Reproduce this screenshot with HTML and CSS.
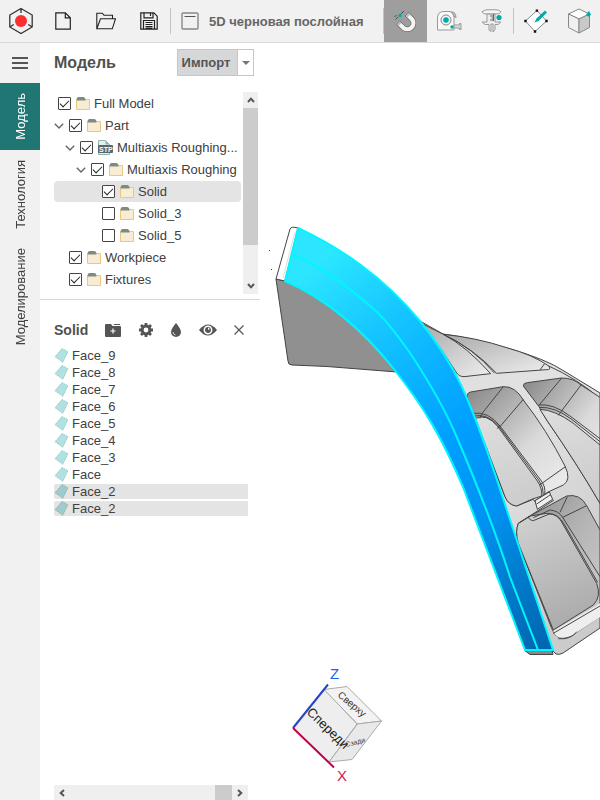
FILE: index.html
```html
<!DOCTYPE html>
<html lang="ru">
<head>
    <meta charset="utf-8">
    <title>5D черновая послойная</title>
    <link rel="stylesheet" href="styles.css">
</head>
<body>
    <!-- shared icons -->
    <svg class="defs" aria-hidden="true">
        <symbol id="folder" viewBox="0 0 14 13">
            <path d="M.5 2.500h13v10H.5z" fill="#f8edd2" stroke="#e9c77c"/>
            <path d="M.5 3.500q0-3.500 2-3.500h4.500q2.500 0 2.500 3.500z" fill="#7d8b80"/>
        </symbol>
        <symbol id="face" viewBox="0 0 14 15">
            <path d="M7.500.6 13.400 3.700 8.300 14.300.6 8.700z" fill="#b2e2e0" stroke="#86bfbd" stroke-width=".8" stroke-dasharray="1.500 .7"/>
        </symbol>
        <symbol id="arrow" viewBox="0 0 10 6">
            <path d="M.8.8 5 5 9.200.8" fill="none" stroke="#666" stroke-width="1.400"/>
        </symbol>
        <symbol id="scroll" viewBox="0 0 8 6">
            <path d="M1 5 4 1.700 7 5" fill="none" stroke="#555" stroke-width="2"/>
        </symbol>
    </svg>

    <header class="toolbar">
        <a class="logo" href="#" aria-label="Home">
            <svg width="26" height="28" viewBox="0 0 26 28" fill="none" stroke="#333" stroke-width="1.300">
                <path d="M13 1.500 24.200 8v12L13 26.500 1.800 20V8zM13 1.500V6M1.800 20l4-2.500M24.200 20l-4-2.500"/>
                <circle cx="13" cy="14" r="6" fill="#fb2f31" stroke="none"/>
            </svg>
        </a>
        <button class="tool" aria-label="New">
            <svg width="16" height="18" viewBox="0 0 16 18" fill="none" stroke="#222" stroke-width="1.200">
                <path d="M.8.8h9.500l5 5v11.400H.8zM10.300.8v5h5"/>
            </svg>
        </button>
        <button class="tool" aria-label="Open">
            <svg width="20" height="18" viewBox="0 0 20 18" fill="none" stroke="#222" stroke-width="1.100">
                <path d="M.8 16.800V1.200h5.500L8 3.200h8.500v3.500M.8 16.800 4.500 6.700h15l-3.200 10.100z"/>
            </svg>
        </button>
        <button class="tool" aria-label="Save">
            <svg width="18" height="18" viewBox="0 0 18 18" fill="none" stroke="#222" stroke-width="1.200">
                <path d="M.8.8h13l3.400 3.400v13H.8zM4 .8v5h9v-5M10.500 1v3M3.500 17V8.500h11V17M5.500 10.500h7M5.500 12.500h7M5.500 14.500h7M5.500 16.200h7"/>
            </svg>
        </button>
        <span class="sep"></span>
        <div class="operation">
            <svg width="18" height="18" viewBox="0 0 18 18" fill="none" stroke="#888">
                <rect x="1" y="1" width="16" height="16" rx="1" stroke-width="1.400"/>
                <path d="M3.500 4.500h11" stroke="#555"/>
            </svg>
            <span>5D черновая послойная</span>
        </div>
        <span class="sep"></span>
        <button class="tool active" aria-label="Snap">
            <svg width="24" height="24" viewBox="0 0 24 24" fill="none">
                <path d="m4 13.500 5.500 5.500A6.200 6.200 0 0 0 18.300 10.500L12.800 5" stroke="#666" stroke-width="5.600"/>
                <path d="m4.500 14 5 5A6.200 6.200 0 0 0 18.300 10.500L13.300 5.500" stroke="#f4f4f4" stroke-width="4.200"/>
                <path d="m4.300 13.800 1.700 1.700M13.100 5.300 14.800 7" stroke="#bbb" stroke-width="4.200"/>
                <path d="m1.500 10.500 2.500-2.500M6 6l4-4M.5 8l2-2" stroke="#444" stroke-width=".9"/>
                <circle cx="6" cy="6.500" r="1.700" fill="#00aaa8"/>
            </svg>
        </button>
        <button class="tool" aria-label="Measure">
            <svg width="26" height="22" viewBox="0 0 26 22" stroke="#999">
                <path d="M14 2h3.500q3 2.500 2.500 6z" fill="#bbb"/>
                <path d="M1.500 20V8q0-6.500 6.500-6.500h6q4 2 4 6V20z" fill="#f9f9f9"/>
                <path d="M18 15h5.500v-1.500h1.500v6h-1.500V18H18z" fill="#ddd"/>
                <circle cx="10" cy="10" r="5" fill="#f4f4f4" stroke="#888"/>
                <circle cx="10" cy="10" r="2.800" fill="#00aaa8" stroke="none"/>
                <circle cx="16" cy="17" r="1.700" fill="#00aaa8" stroke="none"/>
            </svg>
        </button>
        <button class="tool" aria-label="Caliper">
            <svg width="22" height="24" viewBox="0 0 22 24" fill="#eee" stroke="#999">
                <path d="M6 5h8v8h6l-3 2.500h-3v5l-2 2.500V15h-2v7.500L8 21v-5.500H4L1 13h5z"/>
                <path d="M1 2.800Q4 .8 6 .8h9q3 0 5 2l-2 2H3z" fill="#f6f6f6"/>
                <path d="M9 7h3M10.500 9H12M9 11h3M12.500 5v7" stroke="#666"/>
                <circle cx="18" cy="8.500" r="2.600" fill="#00aaa8" stroke="none"/>
            </svg>
        </button>
        <span class="sep"></span>
        <button class="tool" aria-label="Sketch">
            <svg width="24" height="24" viewBox="0 0 24 24">
                <path d="M13 1.500 22.500 12 11 22.500 1.500 12z" fill="#fff" stroke="#888"/>
                <path d="M11.700.4h2.400v2.400h-2.400zM21.300 10.800h2.400v2.400h-2.400zM9.800 21.300h2.400v2.400H9.800zM.3 10.800h2.400v2.400H.3z" fill="#111"/>
                <path d="m12.500 9.500 8.500-8 2 2-8.500 8.500-4 1.500z" fill="#00aaa8"/>
            </svg>
        </button>
        <button class="tool" aria-label="Solid body">
            <svg width="24" height="26" viewBox="0 0 24 26" stroke="#888">
                <path d="m12 1 10.500 5L12 11 1.500 6z" fill="#fff"/>
                <path d="M1.500 6 12 11v14L1.500 19.500z" fill="#f0f0f0"/>
                <path d="M22.500 6 12 11v14l10.500-5.500z" fill="#c9c9c9"/>
                <path d="m22 3 2 3.500-2 2.500-3-2.500z" fill="#00aaa8" stroke="none"/>
            </svg>
        </button>
    </header>

    <div class="workspace">
        <nav class="tabs">
            <button class="menu" aria-label="Menu"><i></i><i></i><i></i></button>
            <button class="tab current"><span>Модель</span></button>
            <button class="tab"><span>Технология</span></button>
            <button class="tab"><span>Моделирование</span></button>
        </nav>

        <aside class="side">
            <section class="model">
                <div class="model-head">
                    <h1>Модель</h1>
                    <div class="import">
                        <button class="import-btn">Импорт</button>
                        <button class="import-more" aria-label="More"></button>
                    </div>
                </div>
                <div class="tree-wrap">
                    <ul class="tree">
                        <li><label><input type="checkbox" checked><svg class="fold"><use href="#folder"/></svg>Full Model</label></li>
                        <li><svg class="arr"><use href="#arrow"/></svg><label><input type="checkbox" checked><svg class="fold"><use href="#folder"/></svg>Part</label></li>
                        <li class="lvl1"><svg class="arr"><use href="#arrow"/></svg><label><input type="checkbox" checked><svg class="stp" viewBox="0 0 16 15">
                            <path d="M1.500.5h7l4 4v10h-11z" fill="#e4f1f0" stroke="#8fb5b3"/>
                            <path d="M8.500.5v4h4z" fill="#8fb5b3"/>
                            <rect x="1" y="5" width="15" height="8" rx="1" fill="#58686b"/>
                            <text x="2" y="12" class="stp-text">STP</text>
                        </svg>Multiaxis Roughing...</label></li>
                        <li class="lvl2"><svg class="arr"><use href="#arrow"/></svg><label><input type="checkbox" checked><svg class="fold"><use href="#folder"/></svg>Multiaxis Roughing</label></li>
                        <li class="lvl3 selected"><label><input type="checkbox" checked><svg class="fold"><use href="#folder"/></svg>Solid</label></li>
                        <li class="lvl3"><label><input type="checkbox"><svg class="fold"><use href="#folder"/></svg>Solid_3</label></li>
                        <li class="lvl3"><label><input type="checkbox"><svg class="fold"><use href="#folder"/></svg>Solid_5</label></li>
                        <li class="lvl0"><label><input type="checkbox" checked><svg class="fold"><use href="#folder"/></svg>Workpiece</label></li>
                        <li class="lvl0"><label><input type="checkbox" checked><svg class="fold"><use href="#folder"/></svg>Fixtures</label></li>
                    </ul>
                    <div class="vscroll">
                        <button aria-label="Up"><svg><use href="#scroll"/></svg></button>
                        <div class="thumb"></div>
                        <button class="down" aria-label="Down"><svg><use href="#scroll"/></svg></button>
                    </div>
                </div>
            </section>

            <section class="faces">
                <div class="faces-head">
                    <h2>Solid</h2>
                    <button aria-label="Add folder">
                        <svg width="16" height="13" viewBox="0 0 16 13">
                            <path d="M0 1q0-1 1-1h5l1.500 2H15q1 0 1 1v9q0 1-1 1H1q-1 0-1-1z" fill="#555"/>
                            <path d="M8.500 0H15v1H9.300z" fill="#555"/>
                            <path d="M8 4.500v5M5.500 7h5" stroke="#fff" stroke-width="1.200"/>
                        </svg>
                    </button>
                    <button aria-label="Settings">
                        <svg width="14" height="14" viewBox="0 0 14 14">
                            <circle cx="7" cy="7" r="3.900" fill="none" stroke="#555" stroke-width="3"/>
                            <path d="M7 0v2.500M7 11.500V14M0 7h2.500M11.500 7H14M2 2l2 2M10 10l2 2M12 2l-2 2M4 10l-2 2" stroke="#555" stroke-width="2.800"/>
                        </svg>
                    </button>
                    <button aria-label="Colour">
                        <svg width="12" height="14" viewBox="0 0 12 14">
                            <path d="M6 0q5 6 5 9a5 5 0 0 1-10 0q0-3 5-9z" fill="#555"/>
                            <path d="M3 9q0 2.500 2.500 3" fill="none" stroke="#ddd"/>
                        </svg>
                    </button>
                    <button aria-label="Visibility">
                        <svg width="18" height="12" viewBox="0 0 18 12">
                            <path d="M0 6Q9-5 18 6 9 17 0 6z" fill="#555"/>
                            <circle cx="9" cy="6" r="3.700" fill="none" stroke="#fff" stroke-width="1.500"/>
                            <path d="M9 6V3.500L11 5z" fill="#fff"/>
                        </svg>
                    </button>
                    <button aria-label="Close">
                        <svg width="10" height="10" viewBox="0 0 10 10">
                            <path d="m.5.5 9 9M9.500.5l-9 9" stroke="#555" stroke-width="1.200"/>
                        </svg>
                    </button>
                </div>
                <ul class="face-list">
                    <li><svg><use href="#face"/></svg>Face_9</li>
                    <li><svg><use href="#face"/></svg>Face_8</li>
                    <li><svg><use href="#face"/></svg>Face_7</li>
                    <li><svg><use href="#face"/></svg>Face_6</li>
                    <li><svg><use href="#face"/></svg>Face_5</li>
                    <li><svg><use href="#face"/></svg>Face_4</li>
                    <li><svg><use href="#face"/></svg>Face_3</li>
                    <li><svg><use href="#face"/></svg>Face</li>
                    <li class="selected"><svg><use href="#face"/></svg>Face_2</li>
                    <li class="selected"><svg><use href="#face"/></svg>Face_2</li>
                </ul>
                <div class="hscroll">
                    <button aria-label="Left"><svg><use href="#scroll"/></svg></button>
                    <div class="thumb"></div>
                    <button class="right" aria-label="Right"><svg><use href="#scroll"/></svg></button>
                </div>
            </section>
        </aside>

        <main class="view">
            <svg class="scene" viewBox="260 43 340 757" preserveAspectRatio="xMinYMin meet">
                <defs>
                    <linearGradient id="blue" gradientUnits="userSpaceOnUse" x1="280" y1="295" x2="560" y2="630">
                        <stop offset="0" stop-color="#2ce6ff"/>
                        <stop offset=".08" stop-color="#22daff"/>
                        <stop offset=".2" stop-color="#16c6ff"/>
                        <stop offset=".35" stop-color="#0ab2ff"/>
                        <stop offset=".5" stop-color="#009fff"/>
                        <stop offset=".7" stop-color="#0092f2"/>
                        <stop offset=".85" stop-color="#007bcb"/>
                        <stop offset="1" stop-color="#0068b2"/>
                    </linearGradient>
                    <linearGradient id="body" x1="0" y1="0" x2=".6" y2="1">
                        <stop offset="0" stop-color="#ddd"/>
                        <stop offset=".5" stop-color="#e2e2e2"/>
                        <stop offset="1" stop-color="#cbcbcb"/>
                    </linearGradient>
                    <linearGradient id="rib" x1="0" y1="0" x2="1" y2="1">
                        <stop offset="0" stop-color="#a9a9a9"/>
                        <stop offset="1" stop-color="#eee"/>
                    </linearGradient>
                    <linearGradient id="wall" x1="0" y1="0" x2=".8" y2="1">
                        <stop offset="0" stop-color="#858585"/>
                        <stop offset=".3" stop-color="#b0b0b0"/>
                        <stop offset=".6" stop-color="#dadada"/>
                        <stop offset="1" stop-color="#ececec"/>
                    </linearGradient>
                    <linearGradient id="wall-low" x1="0" y1="0" x2=".8" y2="1">
                        <stop offset="0" stop-color="#8d8d8d"/>
                        <stop offset=".5" stop-color="#b4b4b4"/>
                        <stop offset="1" stop-color="#ccc"/>
                    </linearGradient>
                    <linearGradient id="floor" x1="0" y1="0" x2=".3" y2="1">
                        <stop offset="0" stop-color="#dedede"/>
                        <stop offset="1" stop-color="#cecece"/>
                    </linearGradient>
                    <linearGradient id="floor-low" x1="0" y1="0" x2=".3" y2="1">
                        <stop offset="0" stop-color="#d2d2d2"/>
                        <stop offset="1" stop-color="#adadad"/>
                    </linearGradient>
                </defs>

                <path d="M269 250.500h1" stroke="#080" stroke-width="1"/>
                <path d="M271 269.500h1" stroke="#c00" stroke-width="1"/>

                <!-- gray frame of the part -->
                <path class="edge" fill="url(#body)" d="M420 321 443 334Q468 337 507 348T564 371L600 393V628L563 653Q560 655 556 654L552 650 520 550 460 383z"/>
                <path class="edge" fill="#909090" d="M276 279 285 281C325 298 363 330 397 372L327 366.500 292 365Q288 365 288 361z"/>
                <path class="edge" fill="#fff" d="M276 279 290 229Q291 226 298 228L285 281z"/>
                <path d="M283 278 295 232" stroke="#ddd"/>
                <path class="edge" fill="#888" d="M524 650 530 654.500H553L552 650z"/>

                <!-- upper ribs -->
                <g class="edge" transform="translate(260 210) scale(.33333)">
                    <path fill="url(#rib)" d="M485 340 550 373Q620 410 692 491L612 500Q596 500 588 486L545 420z"/>
                    <path fill="url(#rib)" d="M550 373Q650 383 740 413 820 435 866 468 875 480 860 479L710 490Q640 415 550 373z"/>
                    <path fill="none" d="M550 373Q640 415 704 490M853 462 840 480M866 468Q950 505 1020 566"/>
                </g>

                <!-- pockets -->
                <g class="edge" transform="translate(380 370) scale(.33333)">
                    <path fill="url(#wall)" d="M262 86Q258 69 272 66L370 50Q405 48 430 90 500 180 555 288 575 330 550 345L500 368 492 375 465 392 470 402 460 388 410 408Q385 405 375 380z"/>
                    <path fill="url(#floor)" d="M286 145Q320 130 352 168L470 330Q488 355 485 378L455 388 410 408Q385 405 375 380z"/>
                    <path fill="none" d="M278 130Q325 123 360 168L482 330Q498 350 494 374M282 138Q322 130 356 168L476 330Q492 352 490 376M304 133 370 50M358 172 430 88M480 344 555 291M304 133 300 145M360 165 352 176"/>

                    <path fill="url(#wall)" d="M430 48Q430 39 442 38L545 24Q580 24 603 45L660 82V400Q590 280 500 150L477 110z"/>
                    <path fill="url(#floor)" d="M480 118Q525 120 580 160L660 225V400Q590 280 500 150z"/>
                    <path fill="none" d="M475 105Q520 100 570 138L660 206M478 112Q525 110 575 148L660 215M477 106 545 24M535 136 603 45"/>

                    <path fill="url(#wall-low)" d="M415 460 450 438 560 378Q600 370 620 407L660 480V740L575 797Q530 820 515 775L415 520Q405 485 415 460z"/>
                    <path fill="url(#floor-low)" d="M415 460 452 438 500 430Q535 430 550 465L650 640Q665 680 640 705L520 780 415 520Q405 485 415 460z"/>
                    <path fill="#eee" stroke="none" d="M520 783 648 708 660 700V742L575 797Q530 815 520 783z"/>
                    <path fill="none" d="M445 438Q445 450 460 452L508 432Q535 430 554 465L653 637M460 443 510 420Q535 422 548 442L660 620M548 442 620 407M540 427 562 380M520 790 660 708M535 806Q570 810 590 786"/>
                    <path fill="#eee" d="M465 392 508 366 518 388 472 418z"/>
                    <path fill="none" d="M470 402 512 374M415 460 450 438 522 390"/>
                </g>

                <!-- picked faces -->
                <path class="picked" fill="url(#blue)" d="M298 228C340 248 382 275 420 321 436 341 450 362 461 385 476 417 487 450 497 480L520 550 553 650H525L463 487C443 440 425 408 393 368 363 330 325 298 285 281z"/>
                <path class="picked" fill="none" d="M293 255C325 268 352 290 377 312 391 326 401 340 410 353 430 383 446 411 458 440 475 480 495 530 510 577L538 650"/>

                <!-- orientation cube -->
                <path d="M293 728 324 689 357 724 329 762z" fill="#eee" stroke="#aaa"/>
                <path d="M324 689.500 347 686.500 381.500 721 357.500 724z" fill="#f3f3f3" stroke="#aaa"/>
                <path d="M357.500 724 381.500 721 352 759.500 329 762z" fill="#e9e9e9" stroke="#aaa"/>
                <path d="m293 728 35-43.500" stroke="#2544c8" stroke-width="2"/>
                <path d="m293 728 41 39.500" stroke="#c3004f" stroke-width="2"/>
                <text class="axis" x="330" y="679" fill="#1b62e8">Z</text>
                <text class="axis" x="337" y="781" fill="#d01c50">X</text>
                <text class="front" transform="translate(306 713) rotate(44)">Спереди</text>
                <text class="top" transform="translate(337 696) rotate(40)">Сверху</text>
                <text class="back" transform="translate(346 747) rotate(-14)">Сзади</text>
            </svg>
        </main>
    </div>
</body>
</html>
```
FILE: styles.css
```css
* {
    box-sizing: border-box;
}

body {
    margin: 0;
    height: 100vh;
    display: flex;
    flex-direction: column;
    overflow: hidden;
    background-color: #fff;
    color: #404040;
    font-family: "Liberation Sans", Arial, sans-serif;
    font-size: 13px;
}

button {
    padding: 0;
    border: 0;
    background: none;
    color: inherit;
    font-family: inherit;
    font-size: inherit;
    cursor: pointer;
}

ul {
    list-style: none;
    margin: 0;
    padding: 0;
}

h1, h2 {
    margin: 0;
    color: #505050;
}

svg {
    display: block;
    flex: none;
}

.defs {
    position: absolute;
    width: 0;
    height: 0;
}

/* toolbar */
.toolbar {
    display: flex;
    align-items: center;
    flex: none;
    height: 43px;
    background-color: #f1f1f1;
    border-bottom: 1px solid #d8d8d8;
    overflow: hidden;
}

.logo {
    display: flex;
    justify-content: center;
    flex: none;
    width: 41px;
}

.tool {
    display: flex;
    align-items: center;
    justify-content: center;
    flex: none;
    width: 43px;
    height: 42px;
}

.tool.active {
    background-color: #9e9e9e;
}

.sep {
    flex: none;
    width: 1px;
    height: 26px;
    background-color: #c4c4c4;
}

.operation {
    display: flex;
    align-items: center;
    gap: 10px;
    flex: none;
    width: 212px;
    padding-left: 10px;
    color: #666;
    font-size: 13px;
    font-weight: bold;
    white-space: nowrap;
}

.workspace {
    display: flex;
    flex: 1;
    min-height: 0;
}

/* vertical tabs */
.tabs {
    display: flex;
    flex-direction: column;
    width: 40px;
    background-color: #f1f1f1;
}

.menu {
    display: flex;
    flex-direction: column;
    align-items: center;
    justify-content: center;
    gap: 3px;
    height: 40px;
}

.menu i {
    width: 16px;
    height: 2px;
    background-color: #555;
}

.tab {
    display: flex;
    align-items: center;
    justify-content: center;
    padding: 10px 0;
}

.tab span {
    writing-mode: vertical-rl;
    transform: rotate(180deg);
}

.tab.current {
    background-color: #1f7672;
    color: #fff;
}

/* model tree */
.side {
    display: flex;
    flex-direction: column;
    flex: none;
    width: 220px;
    background-color: #fff;
}

.model {
    border-bottom: 1px solid #d8d8d8;
    padding-bottom: 5px;
}

.model-head {
    display: flex;
    align-items: center;
    justify-content: space-between;
    height: 49px;
    padding: 0 6px 10px 14px;
}

h1 {
    font-size: 16px;
}

.import {
    display: flex;
    height: 27px;
    border: 1px solid #c4c6c8;
}

.import-btn {
    width: 59px;
    padding-right: 3px;
    background-color: #d5d7d9;
    color: #555;
    font-size: 13px;
    font-weight: bold;
}

.import-more {
    display: flex;
    align-items: center;
    justify-content: center;
    width: 16px;
    border-left: 1px solid #c4c6c8;
}

.import-more::after {
    content: "";
    border: 4px solid transparent;
    border-top-color: #777;
    border-bottom: 0;
}

.tree-wrap {
    display: flex;
    justify-content: space-between;
    padding: 0 2px 0 14px;
}

.tree {
    width: 187px;
    padding: 1px 0 3px;
}

.tree li {
    display: flex;
    align-items: center;
    gap: 5px;
    height: 22px;
    padding-left: 4px;
    border-bottom: 1px solid #fff;
    white-space: nowrap;
}

.tree li:has(.arr) {
    padding-left: 0;
}

.tree .lvl0 {
    padding-left: 15px;
}

.tree .lvl1:has(.arr) {
    padding-left: 11px;
}

.tree .lvl2:has(.arr) {
    padding-left: 22px;
}

.tree .lvl3 {
    padding-left: 48px;
}

.tree .selected {
    background-color: #e4e4e4;
    border-radius: 4px;
}

.tree label {
    display: flex;
    align-items: center;
    gap: 4px;
}

.arr {
    width: 10px;
    height: 6px;
}

.fold {
    width: 14px;
    height: 13px;
    margin-left: 1px;
}

.stp {
    width: 16px;
    height: 15px;
}

.stp-text {
    fill: #fff;
    font-size: 7px;
    font-weight: bold;
}

input[type="checkbox"] {
    appearance: none;
    display: grid;
    place-items: center;
    width: 13px;
    height: 13px;
    margin: 0;
    border: 1px solid #444;
    border-radius: 1px;
    background-color: #fff;
}

input[type="checkbox"]:checked::before {
    content: "";
    width: 8px;
    height: 4px;
    margin-bottom: 2px;
    border-left: 1px solid #222;
    border-bottom: 1px solid #222;
    transform: rotate(-45deg);
}

/* scroll bars */
.vscroll, .hscroll {
    display: flex;
    background-color: #efefef;
}

.vscroll {
    flex-direction: column;
    width: 15px;
}

.vscroll button, .hscroll button {
    display: flex;
    align-items: center;
    justify-content: center;
    flex: none;
    width: 16px;
    height: 16px;
}

.vscroll svg, .hscroll svg {
    width: 8px;
    height: 6px;
}

.vscroll .thumb {
    flex: 0 0 137px;
    background-color: #ccc;
}

.vscroll .down {
    margin-top: auto;
}

.down svg {
    transform: rotate(180deg);
}

.hscroll {
    align-items: center;
    height: 15px;
    margin: auto 12px 0 14px;
}

.hscroll .thumb {
    width: 17px;
    height: 15px;
    margin-left: auto;
    background-color: #ccc;
}

.hscroll svg {
    transform: rotate(-90deg);
}

.hscroll .right svg {
    transform: rotate(90deg);
}

/* faces */
.faces {
    display: flex;
    flex-direction: column;
    flex: 1;
}

.faces-head {
    display: flex;
    align-items: center;
    justify-content: space-between;
    height: 48px;
    padding: 12px 16px 0 14px;
}

h2 {
    font-size: 14px;
}

.face-list {
    display: flex;
    flex-direction: column;
    gap: 2px;
    margin: 0 12px 0 14px;
}

.face-list li {
    display: flex;
    align-items: center;
    gap: 3px;
    height: 15px;
    border-radius: 2px 0 0 2px;
}

.face-list svg {
    width: 15px;
    height: 15px;
}

.face-list .selected {
    background-color: #e4e4e4;
}

.face-list .selected svg {
    filter: brightness(0.9);
}

/* 3D view */
.view {
    flex: 1;
    min-width: 0;
    background-color: #fff;
}

.scene {
    width: 100%;
    height: 100%;
}

.edge {
    stroke: #444;
    stroke-width: 1;
}

g.edge {
    stroke-width: 3;
}

.picked {
    stroke: #00f6ff;
    stroke-width: 2;
}

.axis {
    font-size: 15px;
}

.front {
    font-size: 13px;
    fill: #222;
}

.top {
    font-size: 10px;
    fill: #333;
}

.back {
    font-size: 7px;
    fill: #444;
}
```
